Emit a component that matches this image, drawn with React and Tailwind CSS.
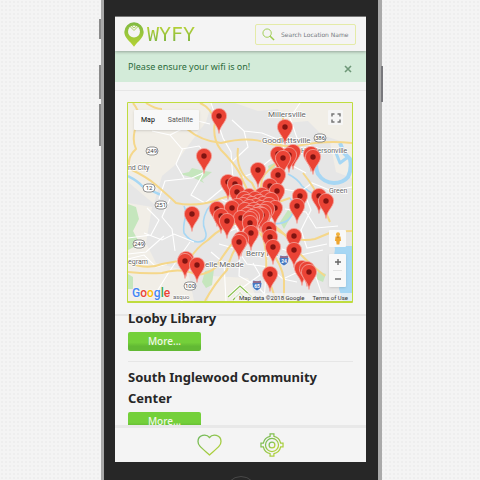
import React from "react";

const PINS = [
  [219, 116], [285, 127], [293, 152], [278, 154], [289, 155], [311, 154], [204, 156], [313, 157], [283, 158],
  [258, 170], [278, 175], [228, 182], [235, 184], [237, 192], [270, 186], [277, 191], [300, 196], [319, 196],
  [326, 201], [297, 206], [217, 209], [275, 208], [237, 206], [192, 214], [221, 216], [262, 215],
  [232, 208], [241, 218], [227, 221], [250, 223], [269, 229], [251, 233], [294, 236], [270, 237],
  [241, 239], [239, 242], [273, 247], [294, 250], [186, 259], [185, 261], [197, 265], [302, 268], [307, 269],
  [309, 272], [270, 274],
];

const DOWNTOWN = [
  [249, 196], [262, 195], [244, 199], [255, 199], [266, 198], [271, 200], [247, 202], [259, 202], [252, 204],
  [263, 204], [269, 205], [243, 205], [256, 206], [249, 207], [261, 208], [267, 209], [245, 210], [254, 210],
  [258, 212], [264, 212], [250, 213], [247, 215], [256, 215], [260, 214], [252, 217], [250, 219],
];

const ALL_PINS = [
  ...PINS.map(([x, y]) => ({ x, y, dot: true })),
  ...DOWNTOWN.map(([x, y]) => ({ x, y, dot: false })),
].sort((a, b) => a.y - b.y);

function Pin({ x, y, dot }) {
  return (
    <g transform={`translate(${x} ${y})`}>
      <path d="M0 17.5C-.8 9.5-7.6 6-7.6-.2a7.6 7.4 0 0 1 15.2 0C7.6 6 .8 9.5 0 17.5Z" fill="#ea4335" stroke="#f4a49d" strokeWidth=".8" />
      {dot && <circle r="2.7" fill="#811411" />}
    </g>
  );
}

function Route({ x, y, n }) {
  return (
    <g>
      <rect x={x - 6} y={y - 4} width="12" height="8" rx="4" fill="#fff" stroke="#777" strokeWidth=".8" />
      <text x={x} y={y + 2} textAnchor="middle" fontSize="6" fill="#444">{n}</text>
    </g>
  );
}

function Interstate({ x, y, n }) {
  return (
    <g>
      <path d={`M${x - 4} ${y - 5}q4 1.5 8 0q3 8-4 11q-7-3-4-11Z`} fill="#4778c0" stroke="#fff" strokeWidth=".7" />
      <path d={`M${x - 4} ${y - 3}h8`} stroke="#d9605a" />
      <text x={x} y={y + 3} textAnchor="middle" fontSize="5" fontWeight="700" fill="#fff">{n}</text>
    </g>
  );
}

function CityMap() {
  return (
    <svg viewBox="128 103 224 198" preserveAspectRatio="xMidYMid slice" className="block h-[198px] w-full font-[Roboto,sans-serif]" role="img" aria-label="Map of wifi locations">
      <rect x="100" y="90" width="280" height="230" fill="#e6e6e6" />
      <g fill="#f1eee7">
        <path d="M128 103h84l-6 19-18 24-14 20-12 10-8 28-26-22Z" />
        <path d="M128 203l24 4-6 36 10 20 32 8 6 30h-66Z" />
        <path d="M235 103h117v42l-30-10-14-14-22 2-8-14-20 2Z" />
        <path d="M330 142h22v36l-16-6Z" />
        <path d="M212 276l36 2 10 23h-50Z" />
      </g>
      <g fill="#c5e6bd">
        <path d="M180 174l9-2 3-4 12 3 8 1-10 8 2 3-10-5Z" />
        <path d="M128 204l8 3 3 12-6 12 7 13-12 6Z" />
        <path d="M205 271l9-2-2 16-6 3-4-6Z" />
        <path d="M280 222l8-12 5 3-9 16Z" />
        <path d="M128 274l5 3v12h-5Z" />
        <path d="M268 166l6-3 2 6-7 2ZM318 271l8 3-3 8-7-3Z" />
      </g>
      <path d="M332 236l6-2 4 12h10v55h-9l-4-12 2-16-8-10 2-14Z" fill="#a7d7f4" />
      <g fill="none" stroke="#a7d7f4" strokeLinejoin="round">
        <path d="M128 176q10 5 14 10 10 5 19 9" strokeWidth="2.5" />
        <path d="M184 206q3 6 1 13-2 8-1 14 6 9 14 9 11-1 7-12-4-8 2-20 5-8 12-8M288 174q10 5 14 12 7 6 14 9M248 224q12-4 20-2 12 4 20-2 10-10 2-22" strokeWidth="1.6" />
        <path d="M316 162q0 8 2 12 6 9 16 9 9 0 14-6 4-8 2-18l-6-6-4-10" strokeWidth="4" />
        <path d="M336 153l4 10 8-6" strokeWidth="3" />
      </g>
      <g fill="none" stroke="#fff" strokeWidth="1.1">
        <path d="M152 131l18 4 12 14 17-3 10 12-6 15-11 5-27 3-6 18M170 135l28-14 12 3M203 174l-12 21 14 8 24-20M183 148l-7 16 8 14M211 103l12 35 8 14 2 28M232 120l12 11 18 2 20 8-7 15-20 16-14 6M244 131l4 16-17 16M300 103l-10 15 7 20 24 14M285 141l-4 15 12 10 13 7M270 174l8 14 22 4 12-9 20 8 20-4M285 209l21 3 10 16 22-2M303 190l8 20-10 20 6 18 20-4M170 199l-8 18 10 12 3 22M147 208l12 12-8 15-23 3M144 233l18 7 12-6 20 8M164 236l-18 16-18 2M190 242l-12 17-9 13-13 21M211 252l13 11 2 38M219 244l18 5 10 15 22 3 14 12 14 3M240 253l-1 23 18 10 14 15M267 260l-3 41M282 249l19 6 22-5M283 279l17-8 16 6 8 24M253 263l7 12-18 13M128 259l16-4 12 12 11-3" />
        <path d="M222 214l37 5 22-7M226 206l13 27 17 8M241 190l3 24 15 20M276 191l-10 25-13 21M230 231l35-14M220 199l38 16 21 1" />
      </g>
      <g fill="none" stroke="#f5d78a" strokeWidth="2" strokeLinejoin="round">
        <path d="M133 103q9 11 4 20-6 16-1 26-10 9-6 20 17 8 26 16 14 12 20 18 17 4 39-2 17-8 28-3" />
        <path d="M146 103q9 6 16 6M187 129q14 12 34 14 28-7 46 0 17 4 30 3 27-6 55-3" />
        <path d="M200 103q12 5 15 19-3 17 6 28 18 18 22 31 10 18 15 42 10 22 8 47l10 31" />
        <path d="M283 116v16q-5 15-1 28-16 10-20 19-3 22-2 33" />
        <path d="M128 263q20 7 34 1 14-3 27-4 8-13 19-20 13-14 34-18 23-4 38 10 17 11 35 7l17-7q11-1 20-1" />
        <path d="M128 272q18 2 34 1 18-6 36 2 12-2 18-8 12-20 26-35" />
        <path d="M205 301q10-18 22-31 4-18 14-29 7-17 20-22M249 224q13 8 20 25 13 15 15 31v21M259 218q23 8 38 33 15 15 28 25" />
        <path d="M303 173q12 15 18 29l9 20M238 148q-3 23 14 35l12 24 26-9" />
      </g>
      <g fontSize="8" fill="#666" stroke="#fff" strokeWidth="1.4" paintOrder="stroke">
        <text x="268" y="117">Millersville</text>
        <text x="262" y="143">Goodlettsville</text>
        <text x="301" y="153" fontSize="7">Hendersonville</text>
        <text x="329" y="193" fontSize="7">Green</text>
        <text x="128" y="170" fontSize="7">nd City</text>
        <text x="128" y="264" fontSize="7">egram</text>
        <text x="205" y="267">elle Meade</text>
        <text x="246" y="256">Berry Hill</text>
        <text x="173" y="299" fontSize="6">asquo</text>
      </g>
      <Route x={152} y={151} n="249" />
      <Route x={149} y={188} n="12" />
      <Route x={161} y={205} n="251" />
      <Route x={139} y={244} n="249" />
      <Route x={190} y={286} n="100" />
      <Route x={320} y={138} n="386" />
      <Interstate x={284} y={260} n="24" />
      <Interstate x={257} y={285} n="65" />
      {ALL_PINS.map((pin) => <Pin key={`${pin.x}-${pin.y}`} {...pin} />)}
    </svg>
  );
}

function MapPanel() {
  return (
    <section className="relative overflow-hidden rounded-[1px] border border-[#bfdc3e] border-b-2 font-[Roboto,sans-serif]">
      <CityMap />
      <div className="absolute top-[7px] left-[6px] flex h-5 items-center rounded-[1px] bg-[#f8f8f8] text-[7px] shadow-sm">
        <button className="px-[7px] text-black">Map</button>
        <button className="px-[6px] text-[#565656]">Satellite</button>
      </div>
      <button aria-label="Full screen" className="absolute top-[7px] right-[9px] flex size-[15px] items-center justify-center rounded-[1px] bg-[#f6f6f6]">
        <svg viewBox="0 0 10 10" className="size-[10px]" fill="none" stroke="#777" strokeWidth="1.5">
          <path d="M1 3.5V1h2.5M6.5 1H9v2.5M9 6.5V9H6.5M3.5 9H1V6.5" />
        </svg>
      </button>
      <div className="absolute right-[6px] bottom-[14px] flex w-[17px] flex-col gap-[7px]">
        <button aria-label="Street view" className="flex h-[17px] items-center justify-center rounded-[1px] bg-[#f8f8f8]">
          <svg viewBox="0 0 8 13" className="h-[13px] w-[8px]">
            <circle cx="4" cy="2.3" r="2" fill="#f3b23c" />
            <path d="M1.5 4.5h5L7 9H5.8L5.4 12.5H2.6L2.2 9H1Z" fill="#eea52f" />
            <path d="M2.5 4.5h3L4 6Z" fill="#b87419" />
          </svg>
        </button>
        <div className="flex h-[33px] flex-col rounded-[1px] bg-[#f8f8f8] shadow-sm">
          <button aria-label="Zoom in" className="flex flex-1 items-center justify-center">
            <svg viewBox="0 0 8 8" className="size-2" stroke="#666" strokeWidth="1.4"><path d="M1 4h6M4 1v6" /></svg>
          </button>
          <div className="mx-1 h-px bg-[#e2e2e2]" />
          <button aria-label="Zoom out" className="flex flex-1 items-center justify-center">
            <svg viewBox="0 0 8 8" className="size-2" stroke="#666" strokeWidth="1.4"><path d="M1 4h6" /></svg>
          </button>
        </div>
      </div>
      <div className="absolute bottom-px left-[4px] flex text-[12px] leading-[14px] font-medium [text-shadow:0_0_2px_white]">
        <span className="text-[#4285f4]">G</span>
        <span className="text-[#ea4335]">o</span>
        <span className="text-[#fbbc05]">o</span>
        <span className="text-[#4285f4]">g</span>
        <span className="text-[#34a853]">l</span>
        <span className="text-[#ea4335]">e</span>
      </div>
      <svg viewBox="0 0 26 16" className="absolute bottom-0 left-[99px] h-[16px] w-[26px]" fill="none" aria-hidden="true">
        <path d="M1 12L13 1l12 11M6 15l7-7 7 7" stroke="#fff" strokeWidth="3" />
        <path d="M1 12L13 1l12 11M6 15l7-7 7 7" stroke="#8cc152" strokeWidth="1.2" />
      </svg>
      <div className="absolute right-0 bottom-0 flex h-2 items-center gap-2 bg-[#f5f5f5]/70 px-1 text-[6px] text-[#333]">
        <span>Map data ©2018 Google</span>
        <a href="#terms">Terms of Use</a>
      </div>
    </section>
  );
}

function Place({ name }) {
  return (
    <article className="flex flex-col items-start gap-[3px] border-t border-[#e6e6e6] pt-[5px] pb-[10px] first:border-t-0 first:pt-0">
      <h2 className="text-[13px] leading-[21px] font-bold text-[#272727]">{name}</h2>
      <button className="h-[19px] w-[73px] rounded-[2px] bg-linear-to-b from-[#74d03a] from-55% to-[#62b934] to-75% text-[10px] leading-[19px] font-medium text-[#f0f8ea]">More...</button>
    </article>
  );
}

export default function App() {
  return (
    <main className="flex h-screen justify-center overflow-hidden bg-[#f4f4f4] bg-[radial-gradient(#eeeeee_1px,transparent_1px)] bg-size-[4px_4px] pl-[3px] font-['Noto_Sans','Open_Sans',sans-serif]">
      <div className="relative flex w-full max-w-[281px] flex-col border-r-4 border-l-[3px] border-[#a9a9a9] bg-[#272727] pt-4 pr-3 pl-[11px]">
        <div className="absolute top-[19px] -left-[5px] h-5 w-[2px] bg-[#8a8a8a]" />
        <div className="absolute top-[65px] -left-[5px] h-[34px] w-[2px] bg-[#8a8a8a]" />
        <div className="absolute top-[104px] -left-[5px] h-[42px] w-[2px] bg-[#8a8a8a]" />
        <div className="absolute top-[66px] -right-[5px] h-9 w-[2px] bg-[#77777b]" />

        <div className="flex min-h-0 flex-1 flex-col overflow-hidden bg-[#f4f4f4]">
          <header className="z-10 flex h-[35px] shrink-0 items-center justify-between border-t border-[#777] pr-[10px] pl-[9px] shadow-[0_1px_3px_rgba(0,0,0,.3)]">
            <div className="flex items-center gap-[3px]">
              <svg viewBox="0 0 20 25" className="h-[25px] w-5" aria-hidden="true">
                <defs>
                  <linearGradient id="leaf" x1="0" y1="0" x2="0" y2="1">
                    <stop offset="0" stopColor="#7fb942" />
                    <stop offset="1" stopColor="#b5d334" />
                  </linearGradient>
                </defs>
                <path d="M10 .3a9.7 9.7 0 0 1 9.7 9.7c0 6-5.7 9-9.7 14.7C6 19 .3 16 .3 10A9.7 9.7 0 0 1 10 .3Z" fill="url(#leaf)" />
                <circle cx="10" cy="9.5" r="6" fill="#f4f4f4" />
                <path d="M6.5 5L10 8.5 13.5 5M8 4.3l2 1.7 2-1.7" fill="none" stroke="#a5cc4c" strokeWidth=".9" />
              </svg>
              <h1 className="bg-linear-to-b from-[#c3d82e] to-[#72b043] bg-clip-text font-['DejaVu_Sans_Mono',monospace] text-[20px] leading-6 text-transparent">WYFY</h1>
            </div>
            <label className="flex h-[21px] w-[101px] items-center gap-[6px] rounded-[2px] border border-[#e4eba8] pl-[6px]">
              <svg viewBox="0 0 14 14" className="size-[13px] shrink-0" fill="none" stroke="#9bcb4b" aria-hidden="true">
                <circle cx="5.5" cy="5.5" r="4.5" />
                <path d="M8.8 8.8L13 13" strokeWidth="1.6" />
              </svg>
              <input type="text" aria-label="Search Location Name" placeholder="Search Location Name" className="w-full min-w-0 bg-transparent font-['DejaVu_Sans',sans-serif] text-[6px] outline-none placeholder:text-[#747b80]" />
            </label>
          </header>

          <div role="alert" className="flex h-[31px] shrink-0 items-center justify-between bg-[#d3ebd9] pr-[14px] pl-[13px] text-[9px] text-[#2c6b3b]">
            <p>Please ensure your wifi is on!</p>
            <button aria-label="Close">
              <svg viewBox="0 0 8 8" className="mt-1 size-2" stroke="#6e9878" strokeWidth="1.6"><path d="M1 1l6 6M7 1L1 7" /></svg>
            </button>
          </div>

          <div className="mt-2 shrink-0 border-t border-b-2 border-[#e6e6e6] pt-[11px] pr-[13px] pb-[11px] pl-3">
            <MapPanel />
          </div>

          <div className="-mt-2 min-h-0 flex-1 overflow-hidden px-[13px]">
            <Place name="Looby Library" />
            <Place name="South Inglewood Community Center" />
          </div>

          <nav className="flex h-[37px] shrink-0 items-center justify-center gap-[38px] border-t-[3px] border-[#e8e8e8] pb-px">
            <button aria-label="Favourites">
              <svg viewBox="0 0 25 22" className="h-[22px] w-[25px]" fill="none" stroke="url(#line)" strokeWidth="1.3">
                <defs>
                  <linearGradient id="line" x1="0" y1="0" x2="1" y2="1">
                    <stop offset="0" stopColor="#6cb75b" />
                    <stop offset="1" stopColor="#c0d735" />
                  </linearGradient>
                </defs>
                <path d="M12.5 3.5C9.5-.5 1 .5 1 7.5c0 4 3 6 11.500 13.500C21 13.500 24 11.500 24 7.500c0-7-8.500-8-11.500-4Z" />
              </svg>
            </button>
            <button aria-label="Locate me">
              <svg viewBox="0 0 25 25" className="size-6" fill="none" stroke="url(#line)" strokeWidth="1.3">
                <path d="M10.5 3.5V1h4v2.5a9 9 0 0 1 7 7H24v4h-2.500a9 9 0 0 1-7 7V24h-4v-2.500a9 9 0 0 1-7-7H1v-4h2.500a9 9 0 0 1 7-7Z" />
                <circle cx="12.5" cy="12.5" r="6.8" />
                <circle cx="12.5" cy="12.5" r="3" />
              </svg>
            </button>
          </nav>
        </div>

        <div className="flex h-[18px] shrink-0 items-start justify-center overflow-hidden pt-[14px]">
          <div className="size-8 shrink-0 rounded-full border border-[#484848]" />
        </div>
      </div>
    </main>
  );
}
